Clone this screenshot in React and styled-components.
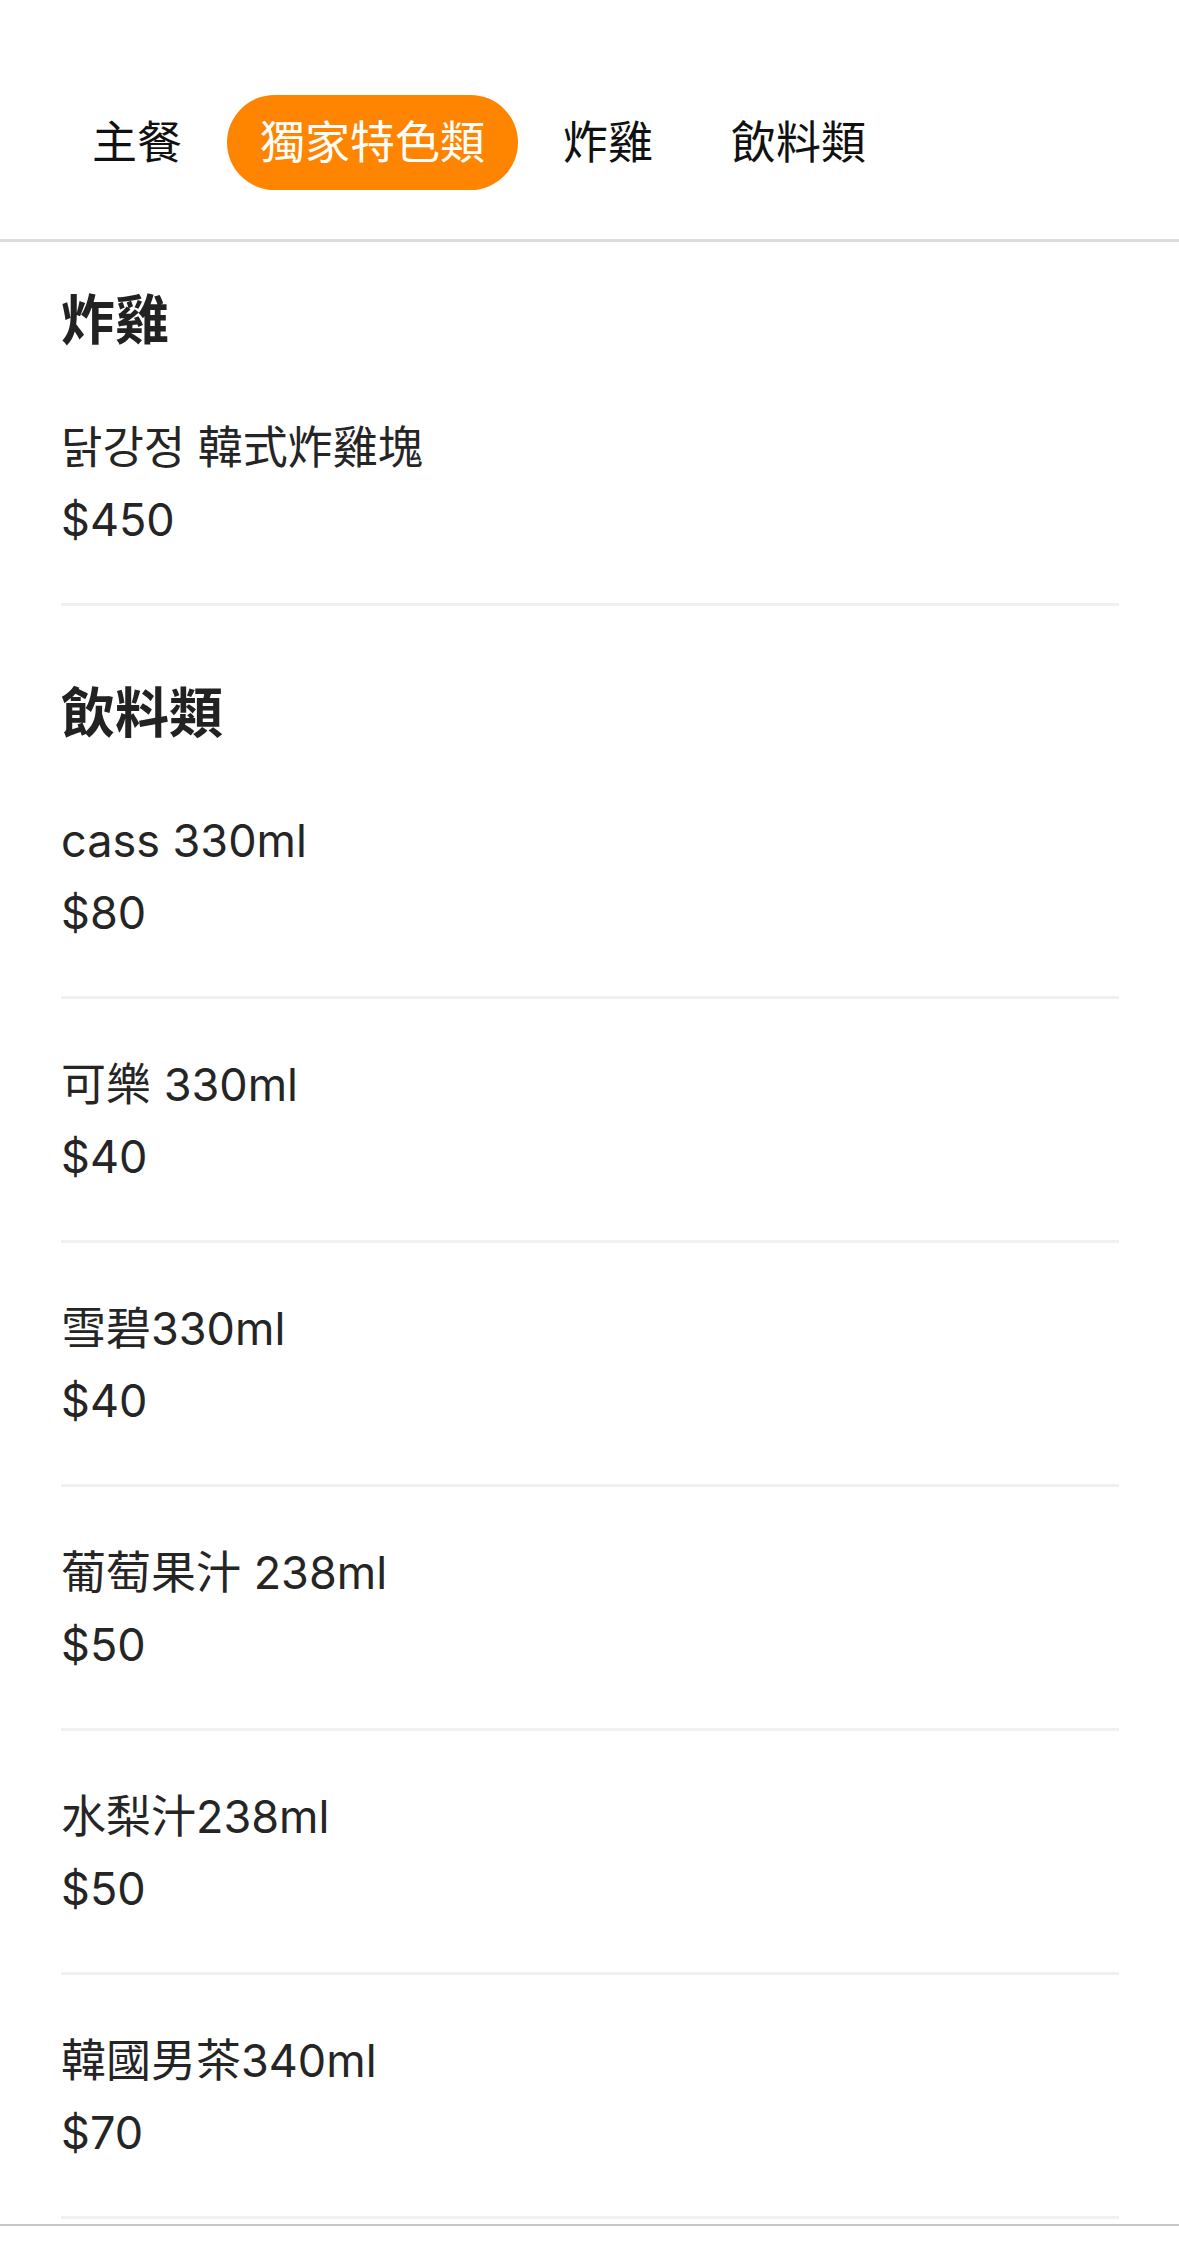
import React from "react";
import styled, { createGlobalStyle } from "styled-components";

const GlobalStyle = createGlobalStyle`
  html, body {
    margin: 0;
    padding: 0;
    background: #ffffff;
  }
  body {
    font-family: "Inter", "Noto Sans CJK TC", "Noto Sans CJK KR", sans-serif;
    color: #222222;
    -webkit-font-smoothing: antialiased;
  }
  * { box-sizing: border-box; }
`;

const Header = styled.header`
  display: flex;
  align-items: center;
  gap: 12px;
  padding: 95px 0 49px 59px;
  border-bottom: 3px solid #dddddd;
  background: #ffffff;
`;

const Tab = styled.button`
  height: 95px;
  padding: 0 33px;
  border: none;
  border-radius: 48px;
  font-family: inherit;
  font-size: 45px;
  line-height: 95px;
  white-space: nowrap;
  cursor: pointer;
  background: ${(p) => (p.$active ? "#ff8500" : "transparent")};
  color: ${(p) => (p.$active ? "#ffffff" : "#111111")};
`;

const Content = styled.main`
  padding: 0 60px 0 61px;
`;

const Section = styled.section`
  padding: 38px 0 29px;
`;

const SectionTitle = styled.h2`
  margin: 0;
  font-size: 54px;
  line-height: 82px;
  font-weight: 700;
  color: #222222;
`;

const ItemList = styled.ul`
  list-style: none;
  margin: 0;
  padding: 0;
`;

const Item = styled.li`
  display: flex;
  flex-direction: column;
  padding: 50px 0 47px;
  border-bottom: 3px solid #f0f0f0;
`;

const ItemText = styled.span`
  font-size: 45px;
  line-height: 72px;
  color: #252525;
  white-space: nowrap;
`;

const BottomBar = styled.div`
  position: fixed;
  left: 0;
  right: 0;
  bottom: 0;
  height: 23px;
  background: #ffffff;
  border-top: 2px solid #c8c8c8;
`;

const tabs = ["主餐", "獨家特色類", "炸雞", "飲料類"];

const sections = [
  {
    title: "炸雞",
    items: [{ name: "닭강정 韓式炸雞塊", price: 450 }],
  },
  {
    title: "飲料類",
    items: [
      { name: "cass 330ml", price: 80 },
      { name: "可樂 330ml", price: 40 },
      { name: "雪碧330ml", price: 40 },
      { name: "葡萄果汁 238ml", price: 50 },
      { name: "水梨汁238ml", price: 50 },
      { name: "韓國男茶340ml", price: 70 },
    ],
  },
];

export default function App() {
  return (
    <>
      <GlobalStyle />
      <Header>
        {tabs.map((t) => (
          <Tab key={t} $active={t === "獨家特色類"}>
            {t}
          </Tab>
        ))}
      </Header>
      <Content>
        {sections.map((s) => (
          <Section key={s.title}>
            <SectionTitle>{s.title}</SectionTitle>
            <ItemList>
              {s.items.map((it) => (
                <Item key={it.name}>
                  <ItemText>{it.name}</ItemText>
                  <ItemText>${it.price}</ItemText>
                </Item>
              ))}
            </ItemList>
          </Section>
        ))}
      </Content>
      <BottomBar />
    </>
  );
}
